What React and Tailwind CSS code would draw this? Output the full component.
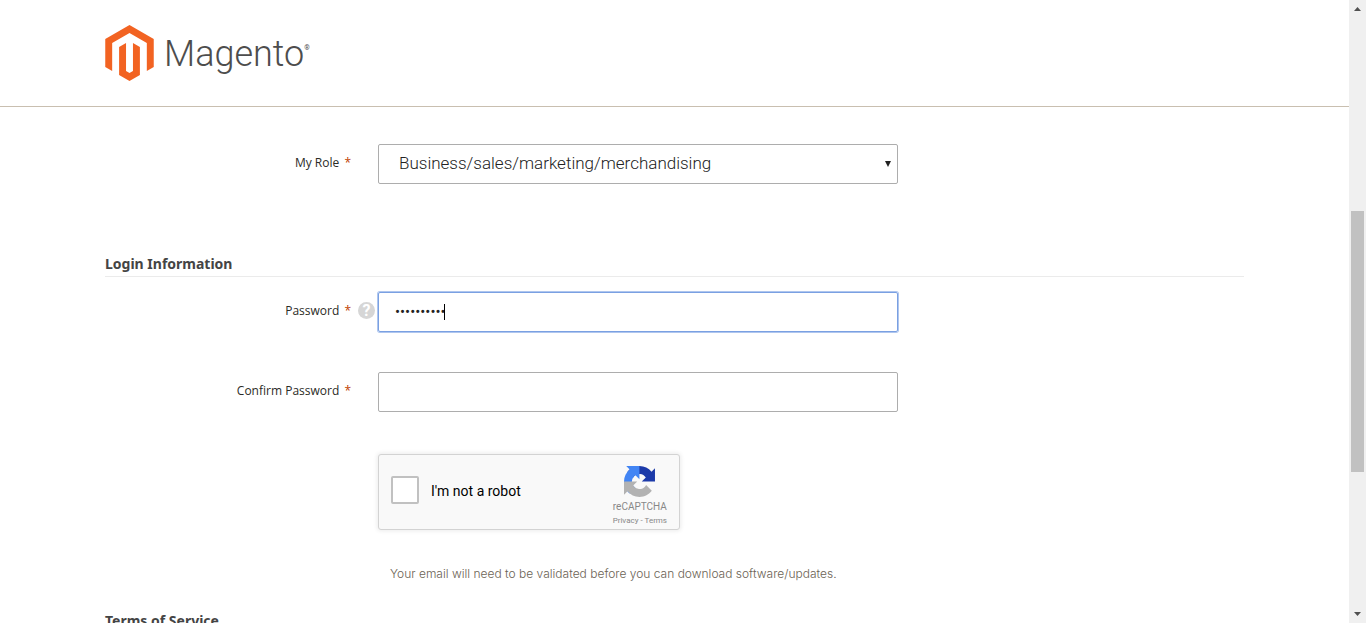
import React from "react";

function MagentoLogo() {
  return (
    <a href="#" aria-label="Magento" className="flex items-start text-[#4d4d4d]">
      <svg viewBox="1.609 0 20.782 24" className="h-14 w-[49px]" fill="#f26322" aria-hidden="true">
        <path d="M12 24l-4.455-2.572v-12l2.97-1.715v12.001l1.485.902 1.485-.902V7.713l2.971 1.715v12L12 24zM22.391 6v12l-2.969 1.714V7.713L12 3.43 4.574 7.713v12.001L1.609 18V6L12 0l10.391 6z" />
      </svg>
      <span className="ml-2.5 pt-2 font-['Roboto',sans-serif] text-[36px] leading-[42px] font-light">Magento</span>
      <span className="pt-5 font-['Roboto',sans-serif] text-[7px] leading-[7px]">®</span>
    </a>
  );
}

function Field({ id, label, help, children }) {
  return (
    <div className="grid grid-cols-[246px_27px_minmax(0,520px)]">
      <label
        htmlFor={id}
        className="pt-2.5 text-right font-['Open_Sans',sans-serif] text-xs leading-[18px] text-[#2b2b26]"
      >
        {label} <span className="ml-0.5 text-[#c04000]">*</span>
      </label>
      <div className="flex items-start justify-end pt-2.5 pr-[3px]">
        {help && (
          <button
            type="button"
            aria-label="Password help"
            className="flex h-[17px] w-[17px] items-center justify-center rounded-full bg-[#d6d6d6] font-['Roboto',sans-serif] text-base leading-none font-bold text-white"
          >
            ?
          </button>
        )}
      </div>
      {children}
    </div>
  );
}

function SectionTitle({ children }) {
  return (
    <h2 className="border-b border-[#ebebeb] pb-[3px] font-['Noto_Sans',sans-serif] text-sm leading-[18px] font-bold text-[#444]">
      {children}
    </h2>
  );
}

function Recaptcha() {
  return (
    <div className="ml-[273px] flex h-[76px] w-[302px] items-center rounded-[3px] border border-[#d3d3d3] bg-[#f9f9f9] pl-3 font-['Roboto',sans-serif] shadow-[0_0_4px_1px_rgba(0,0,0,0.08)]">
      <input
        id="robot"
        type="checkbox"
        className="mb-1 h-7 w-7 appearance-none rounded-xs border-2 border-[#c1c1c1] bg-white"
      />
      <label htmlFor="robot" className="mb-0.5 ml-3 text-sm leading-[18px] text-black">
        I'm not a robot
      </label>
      <div className="mr-3 ml-auto flex flex-col items-center pt-2 text-[#888]">
        <svg viewBox="0 0 64 64" className="h-[31px] w-[31px]" aria-hidden="true">
          <path
            fill="#1c3aa9"
            d="M64 31.955l-.033-1.37V4.687l-7.16 7.16C50.948 4.674 42.033.093 32.05.093c-10.4 0-19.622 4.96-25.458 12.64l11.736 11.86a15.55 15.55 0 0 1 4.754-5.334c2.05-1.6 4.952-2.906 8.968-2.906.485 0 .86.057 1.135.163 4.976.393 9.288 3.14 11.828 7.124l-8.307 8.307L64 31.953"
          />
          <path
            fill="#4285f4"
            d="M31.862.094l-1.37.033H4.594l7.16 7.16C4.58 13.147 0 22.06 0 32.046c0 10.4 4.96 19.622 12.64 25.458L24.5 45.768a15.56 15.56 0 0 1-5.334-4.754c-1.6-2.05-2.906-4.952-2.906-8.968 0-.485.057-.86.163-1.135.393-4.976 3.14-9.288 7.124-11.828l8.307 8.307L31.86.095"
          />
          <path
            fill="#b2b2b2"
            d="M.001 32.045l.033 1.37v25.898l7.16-7.16c5.86 7.173 14.774 11.754 24.76 11.754 10.4 0 19.622-4.96 25.458-12.64l-11.736-11.86a15.55 15.55 0 0 1-4.754 5.334c-2.05 1.6-4.952 2.906-8.968 2.906-.485 0-.86-.057-1.135-.163-4.976-.393-9.288-3.14-11.828-7.124l8.307-8.307c-10.522.04-22.4.066-27.295-.005"
          />
        </svg>
        <div className="mt-1 text-[10px] leading-3">reCAPTCHA</div>
        <div className="mt-0.5 text-[8px] leading-3">
          <a href="#">Privacy</a> - <a href="#">Terms</a>
        </div>
      </div>
    </div>
  );
}

function ScrollBar() {
  return (
    <div aria-hidden="true" className="flex h-full w-[17px] shrink-0 flex-col items-center justify-between bg-[#f0f0f0]">
      <svg viewBox="0 0 17 17" className="h-[17px] w-[17px]" fill="#505050">
        <path d="M5 11h7L8.500 7z" />
      </svg>
      <div className="flex w-[13px] flex-1 flex-col">
        <div className="flex-[194]" />
        <div className="flex-[261] bg-[#c1c1c1]" />
        <div className="flex-[134]" />
      </div>
      <svg viewBox="0 0 17 17" className="h-[17px] w-[17px]" fill="#505050">
        <path d="M5 6h7L8.500 10z" />
      </svg>
    </div>
  );
}

export default function App() {
  return (
    <div className="flex h-screen overflow-hidden bg-white">
      <div className="min-w-0 flex-1 overflow-hidden">
        <header className="border-b border-[#c9bfb0]">
          <div className="mx-auto max-w-[1139px] pt-[25px] pb-[25px]">
            <MagentoLogo />
          </div>
        </header>
        <main className="mx-auto max-w-[1139px] pt-[37px]">
          <form>
            <Field id="role" label="My Role">
              <div className="relative">
                <select
                  id="role"
                  className="h-10 w-full appearance-none rounded-xs border border-[#adadad] bg-white px-5 font-['Roboto',sans-serif] text-[17px] font-light text-[#222]"
                >
                  <option>Business/sales/marketing/merchandising</option>
                </select>
                <svg
                  viewBox="0 0 6 6"
                  className="pointer-events-none absolute top-[17px] right-[7px] h-1.5 w-1.5"
                  fill="#222"
                  aria-hidden="true"
                >
                  <path d="M0 0h6L3 6z" />
                </svg>
              </div>
            </Field>

            <div className="mt-[71px]">
              <SectionTitle>Login Information</SectionTitle>
            </div>

            <div className="mt-[15px] flex flex-col gap-10">
              <Field id="password" label="Password" help>
                <div className="relative">
                  <input
                    id="password"
                    type="password"
                    defaultValue="mypassword"
                    className="h-10 w-full rounded-xs border border-[#7aa0e2] px-4 font-['Roboto',sans-serif] text-[15px] text-[#222] ring-1 ring-[#7aa0e2]/60 outline-none"
                  />
                  <span className="absolute top-3 left-[66px] h-4 w-px bg-black" aria-hidden="true" />
                </div>
              </Field>
              <Field id="confirm" label="Confirm Password">
                <input
                  id="confirm"
                  type="password"
                  className="h-10 w-full rounded-xs border border-[#adadad] px-4 font-['Roboto',sans-serif] text-[15px] outline-none"
                />
              </Field>
            </div>

            <div className="mt-[42px]">
              <Recaptcha />
            </div>
            <p className="mt-[35px] ml-[285px] font-['Inter',sans-serif] text-xs leading-[18px] font-light text-[#6b6254]">
              Your email will need to be validated before you can download software/updates.
            </p>
            <div className="mt-[29px]">
              <SectionTitle>Terms of Service</SectionTitle>
            </div>
          </form>
        </main>
      </div>
      <ScrollBar />
    </div>
  );
}
